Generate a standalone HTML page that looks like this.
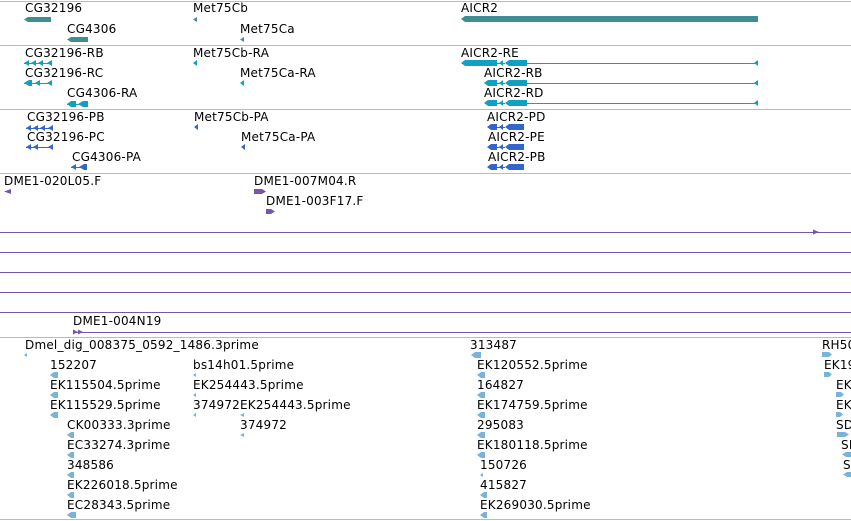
<!DOCTYPE html>
<html><head><meta charset="utf-8"><style>
html,body{margin:0;padding:0;background:#fff;width:851px;height:521px;overflow:hidden}
svg{display:block}
text{font-family:"DejaVu Sans","Liberation Sans",sans-serif;font-size:12px;fill:#000;letter-spacing:0.2px}
line{shape-rendering:crispEdges}
</style></head><body>
<svg width="851" height="521" viewBox="0 0 851 521" xmlns="http://www.w3.org/2000/svg">
<g stroke="#bbb" stroke-width="1">
<line x1="0" y1="1.5" x2="851" y2="1.5"/><line x1="0" y1="45.5" x2="851" y2="45.5"/>
<line x1="0" y1="109.5" x2="851" y2="109.5"/><line x1="0" y1="173.5" x2="851" y2="173.5"/>
<line x1="0" y1="337.5" x2="851" y2="337.5"/><line x1="0" y1="519.5" x2="851" y2="519.5"/>
</g>
<!-- gene track -->
<g fill="#3f8e90">
<polygon points="24,19.5 28,17 51,17 51,22 28,22"/>
<polygon points="67,39.5 71,37 88,37 88,42 71,42"/>
<polygon points="193,19.5 197,17 197,22"/>
<polygon points="240,39.5 244,37 244,42"/>
<polygon points="461,19 465,16 758,16 758,22 465,22"/>
</g>
<text x="25" y="12">CG32196</text><text x="67" y="33">CG4306</text>
<text x="193" y="12">Met75Cb</text><text x="240" y="33">Met75Ca</text>
<text x="461" y="12">AICR2</text>
<!-- transcripts -->
<g fill="#11a0bf" stroke="#11a0bf">
<g stroke="none">
<polygon points="24,63 29,60 29,66"/><polygon points="31,63 36,60 36,66"/><polygon points="38,63 43,60 43,66"/><polygon points="47,63 52,60 52,66"/>
<polygon points="24,83 29,80 32,80 32,86 29,86"/><polygon points="35,83 40,80 40,86"/><polygon points="47,83 52,80 52,86"/>
<polygon points="67,104 71,101 76,101 76,107 71,107"/><polygon points="78,104 83,101 88,101 88,107 83,107"/>
<polygon points="193,63 197,60 197,66"/><polygon points="240,83 244,80 244,86"/>
<polygon points="461,63 465,60 497,60 497,66 465,66"/><polygon points="499,63 503,60 503,66"/><polygon points="505,63 509,60 527,60 527,66 509,66"/><polygon points="754,63 758,60 758,66"/>
<polygon points="484,83 488,80 497,80 497,86 488,86"/><polygon points="499,83 503,80 503,86"/><polygon points="505,83 509,80 527,80 527,86 509,86"/><polygon points="754,83 758,80 758,86"/>
<polygon points="484,103 488,100 497,100 497,106 488,106"/><polygon points="499,103 503,100 503,106"/><polygon points="505,103 509,100 527,100 527,106 509,106"/><polygon points="754,103 758,100 758,106"/>
</g>
<g stroke-width="1">
<line x1="24" y1="63.5" x2="52" y2="63.5"/><line x1="24" y1="83.5" x2="52" y2="83.5"/><line x1="67" y1="104.5" x2="88" y2="104.5"/>
<line x1="527" y1="63.5" x2="758" y2="63.5"/><line x1="497" y1="63.5" x2="505" y2="63.5"/>
<line x1="527" y1="83.5" x2="758" y2="83.5"/><line x1="497" y1="83.5" x2="505" y2="83.5"/>
<line x1="527" y1="103.5" x2="758" y2="103.5"/><line x1="497" y1="103.5" x2="505" y2="103.5"/>
</g></g>
<text x="25" y="57">CG32196-RB</text><text x="25" y="77">CG32196-RC</text><text x="67" y="97">CG4306-RA</text>
<text x="193" y="57">Met75Cb-RA</text><text x="240" y="77">Met75Ca-RA</text>
<text x="461" y="57">AICR2-RE</text><text x="484" y="77">AICR2-RB</text><text x="484" y="97">AICR2-RD</text>
<!-- proteins -->
<g fill="#3366cc" stroke="#3366cc">
<g stroke="none">
<polygon points="26,128 31,125 31,131"/><polygon points="33,128 38,125 38,131"/><polygon points="40,128 45,125 45,131"/><polygon points="48,128 53,125 53,131"/>
<polygon points="26,147 31,144 31,150"/><polygon points="33,147 38,144 38,150"/><polygon points="48,147 53,144 53,150"/>
<polygon points="71,167 76,164 76,170"/><polygon points="79,167 84,164 87,164 87,170 84,170"/>
<polygon points="194,127 198,124 198,130"/><polygon points="241,147 245,144 245,150"/>
<polygon points="487,127 491,124 497,124 497,130 491,130"/><polygon points="499,127 503,124 503,130"/><polygon points="505,127 509,124 524,124 524,130 509,130"/>
<polygon points="487,147 491,144 497,144 497,150 491,150"/><polygon points="499,147 503,144 503,150"/><polygon points="505,147 509,144 524,144 524,150 509,150"/>
<polygon points="487,167 491,164 497,164 497,170 491,170"/><polygon points="499,167 503,164 503,170"/><polygon points="505,167 509,164 524,164 524,170 509,170"/>
</g>
<g stroke-width="1"><line x1="26" y1="128.5" x2="53" y2="128.5"/><line x1="26" y1="147.5" x2="53" y2="147.5"/><line x1="71" y1="167.5" x2="87" y2="167.5"/>
<line x1="497" y1="127.5" x2="505" y2="127.5"/><line x1="497" y1="147.5" x2="505" y2="147.5"/><line x1="497" y1="167.5" x2="505" y2="167.5"/></g></g>
<text x="27" y="121">CG32196-PB</text><text x="27" y="141">CG32196-PC</text><text x="72" y="161">CG4306-PA</text>
<text x="194" y="121">Met75Cb-PA</text><text x="241" y="141">Met75Ca-PA</text>
<text x="487" y="121">AICR2-PD</text><text x="488" y="141">AICR2-PE</text><text x="488" y="161">AICR2-PB</text>
<!-- clones -->
<g fill="#7755aa" stroke="#7755aa">
<g stroke="none">
<polygon points="4,191.5 11,189 11,194"/>
<polygon points="254,189 262,189 266,191.5 262,194 254,194"/>
<polygon points="266,209 271,209 275,211.5 271,214 266,214"/>
<polygon points="813,229.5 819,232 813,234.5"/>
<polygon points="73,329.5 78,332 73,334.5"/><polygon points="78,329.5 83,332 78,334.5"/>
</g>
<g stroke-width="1"><line x1="0" y1="232.5" x2="851" y2="232.5"/><line x1="0" y1="252.5" x2="851" y2="252.5"/>
<line x1="0" y1="272.5" x2="851" y2="272.5"/><line x1="0" y1="292.5" x2="851" y2="292.5"/><line x1="0" y1="312.5" x2="851" y2="312.5"/>
<line x1="73" y1="332.5" x2="851" y2="332.5"/></g></g>
<text x="4" y="185">DME1-020L05.F</text><text x="254" y="185">DME1-007M04.R</text><text x="266" y="205">DME1-003F17.F</text>
<text x="73" y="325">DME1-004N19</text>
<!-- ESTs -->
<g fill="#7ab3d9">
<polygon points="24,355 27,353 27,357"/>
<polygon points="50,375 54,372 58,372 58,378 54,378"/>
<polygon points="50,395 54,392 58,392 58,398 54,398"/>
<polygon points="50,415 54,412 58,412 58,418 54,418"/>
<polygon points="67,435 71,432 74,432 74,438 71,438"/>
<polygon points="67,455 71,452 74,452 74,458 71,458"/>
<polygon points="67,475 71,472 74,472 74,478 71,478"/>
<polygon points="67,495 71,492 74,492 74,498 71,498"/>
<polygon points="67,515 71,512 76,512 76,518 71,518"/>
<polygon points="193,375 196,373 196,377"/><polygon points="193,395 196,393 196,397"/><polygon points="193,415 196,413 196,417"/>
<polygon points="240,415 244,413 244,417"/><polygon points="240,435 244,433 244,437"/>
<polygon points="471,355 475,352 481,352 481,358 475,358"/>
<polygon points="477,375 481,372 485,372 485,378 481,378"/>
<polygon points="477,395 481,392 485,392 485,398 481,398"/>
<polygon points="477,415 481,412 485,412 485,418 481,418"/>
<polygon points="477,435 481,432 485,432 485,438 481,438"/>
<polygon points="477,455 481,452 485,452 485,458 481,458"/>
<polygon points="480,475 483,473 483,477"/>
<polygon points="480,495 484,492 487,492 487,498 484,498"/>
<polygon points="480,515 484,512 487,512 487,518 484,518"/>
<polygon points="822,352 829,352 832,354.5 829,357 822,357"/>
<polygon points="824,372 829,372 832,374.5 829,377 824,377"/>
<polygon points="836,392 841,392 844,394.5 841,397 836,397"/>
<polygon points="836,412 840,412 843,414.5 840,417 836,417"/>
<polygon points="837,432 845,432 849,434.5 845,437 837,437"/>
<polygon points="842,454.5 846,452 851,452 851,457 846,457"/>
<polygon points="843,474.5 847,472 851,472 851,477 847,477"/>
</g>
<text x="25" y="349">Dmel_dig_008375_0592_1486.3prime</text>
<text x="50" y="369">152207</text><text x="50" y="389">EK115504.5prime</text><text x="50" y="409">EK115529.5prime</text>
<text x="67" y="429">CK00333.3prime</text><text x="67" y="449">EC33274.3prime</text><text x="67" y="469">348586</text>
<text x="67" y="489">EK226018.5prime</text><text x="67" y="509">EC28343.5prime</text>
<text x="193" y="369">bs14h01.5prime</text><text x="193" y="389">EK254443.5prime</text>
<text x="193" y="409">374972</text><text x="240" y="409">EK254443.5prime</text><text x="240" y="429">374972</text>
<text x="470" y="349">313487</text><text x="477" y="369">EK120552.5prime</text><text x="477" y="389">164827</text>
<text x="477" y="409">EK174759.5prime</text><text x="477" y="429">295083</text><text x="477" y="449">EK180118.5prime</text>
<text x="480" y="469">150726</text><text x="480" y="489">415827</text><text x="480" y="509">EK269030.5prime</text>
<text x="822" y="349">RH50</text><text x="824" y="369">EK19</text><text x="836" y="389">EK</text><text x="836" y="409">EK</text>
<text x="836" y="429">SD</text><text x="841" y="449">SD</text><text x="843" y="469">SD</text>
</svg>
</body></html>
